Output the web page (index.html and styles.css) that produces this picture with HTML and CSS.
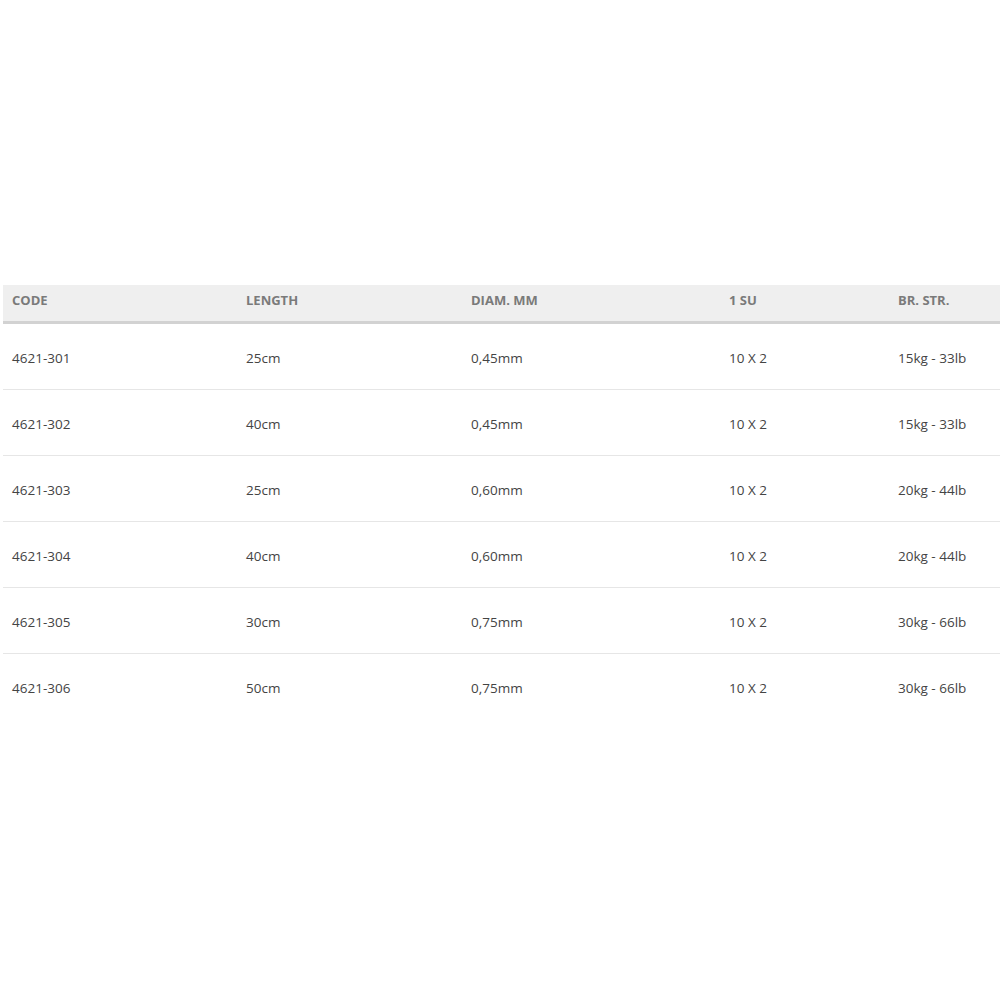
FILE: index.html
```html
<!DOCTYPE html>
<html>
<head>
<meta charset="utf-8">
<link rel="stylesheet" href="styles.css">
</head>
<body>
<div class="spec">
  <div class="row head">
    <div>CODE</div><div>LENGTH</div><div>DIAM. MM</div><div>1 SU</div><div>BR. STR.</div>
  </div>
  <div class="row"><div>4621-301</div><div>25cm</div><div>0,45mm</div><div>10 X 2</div><div>15kg - 33lb</div></div>
  <div class="row"><div>4621-302</div><div>40cm</div><div>0,45mm</div><div>10 X 2</div><div>15kg - 33lb</div></div>
  <div class="row"><div>4621-303</div><div>25cm</div><div>0,60mm</div><div>10 X 2</div><div>20kg - 44lb</div></div>
  <div class="row"><div>4621-304</div><div>40cm</div><div>0,60mm</div><div>10 X 2</div><div>20kg - 44lb</div></div>
  <div class="row"><div>4621-305</div><div>30cm</div><div>0,75mm</div><div>10 X 2</div><div>30kg - 66lb</div></div>
  <div class="row last"><div>4621-306</div><div>50cm</div><div>0,75mm</div><div>10 X 2</div><div>30kg - 66lb</div></div>
</div>
</body>
</html>
```
FILE: styles.css
```css
html, body {
  margin: 0;
  padding: 0;
  background: #fff;
}
body {
  font-family: "Open Sans", "DejaVu Sans", sans-serif;
  font-size: 13.5px;
  color: #444;
}
.spec {
  margin: 285px 0 0 3px;
  width: 997px;
}
.row {
  display: grid;
  grid-template-columns: 234px 225px 258px 169px 111px;
  align-items: center;
  height: 65px;
  border-bottom: 1px solid #e6e6e6;
}
.row > div {
  padding-left: 9px;
  padding-top: 3px;
  white-space: nowrap;
}
.row.head {
  height: 36px;
  background: #efefef;
  border-bottom: 3px solid #d2d2d2;
  font-weight: 700;
  color: #7a7a7a;
  font-size: 13px;
}
.row.head > div {
  padding-top: 0;
  padding-bottom: 6px;
}
.row.first {
  height: 66px;
}
.row.last {
  border-bottom: none;
}
```
